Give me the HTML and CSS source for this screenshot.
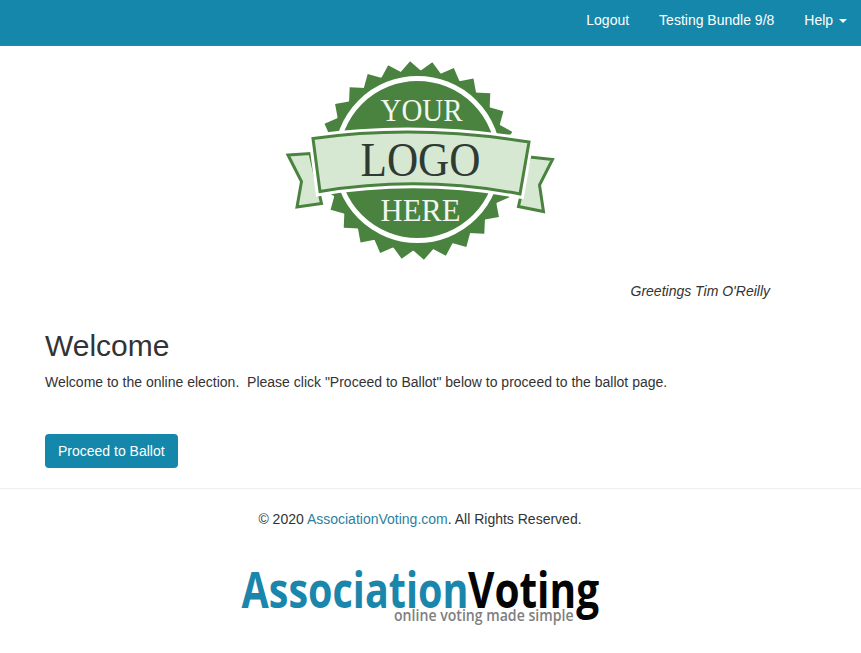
FILE: index.html
```html
<!DOCTYPE html>
<html>
<head>
<title>Welcome</title>
<link rel="stylesheet" href="styles.css">
</head>
<body>
<nav class="navbar">
    <a href="#">Logout</a>
    <a href="#">Testing Bundle 9/8</a>
    <a href="#">Help <span class="caret"></span></a>
</nav>

<div class="page">
    <div class="logo-row">
        <svg class="seal" width="270" height="204" viewBox="285 58 270 204">
            <defs>
                <polygon id="tooth" points="406,72 417,61 428,72"/>
            </defs>
            <path class="tail" d="M288 155 L310 153.5 L321.5 203.5 L297 207 L301.5 181.5 Z"/>
            <path class="tail" d="M529.5 157 L552.5 159.5 L539.5 185 L543.5 211.5 L518.5 206.5 Z"/>
            <g class="teeth">
                <circle cx="417" cy="160.5" r="90"/>
                <use href="#tooth" transform="rotate(-4 417 160.5)"/>
                <use href="#tooth" transform="rotate(8.86 417 160.5)"/>
                <use href="#tooth" transform="rotate(21.71 417 160.5)"/>
                <use href="#tooth" transform="rotate(34.57 417 160.5)"/>
                <use href="#tooth" transform="rotate(47.43 417 160.5)"/>
                <use href="#tooth" transform="rotate(60.29 417 160.5)"/>
                <use href="#tooth" transform="rotate(73.14 417 160.5)"/>
                <use href="#tooth" transform="rotate(86 417 160.5)"/>
                <use href="#tooth" transform="rotate(98.86 417 160.5)"/>
                <use href="#tooth" transform="rotate(111.71 417 160.5)"/>
                <use href="#tooth" transform="rotate(124.57 417 160.5)"/>
                <use href="#tooth" transform="rotate(137.43 417 160.5)"/>
                <use href="#tooth" transform="rotate(150.29 417 160.5)"/>
                <use href="#tooth" transform="rotate(163.14 417 160.5)"/>
                <use href="#tooth" transform="rotate(176 417 160.5)"/>
                <use href="#tooth" transform="rotate(188.86 417 160.5)"/>
                <use href="#tooth" transform="rotate(201.71 417 160.5)"/>
                <use href="#tooth" transform="rotate(214.57 417 160.5)"/>
                <use href="#tooth" transform="rotate(227.43 417 160.5)"/>
                <use href="#tooth" transform="rotate(240.29 417 160.5)"/>
                <use href="#tooth" transform="rotate(253.14 417 160.5)"/>
                <use href="#tooth" transform="rotate(266 417 160.5)"/>
                <use href="#tooth" transform="rotate(278.86 417 160.5)"/>
                <use href="#tooth" transform="rotate(291.71 417 160.5)"/>
                <use href="#tooth" transform="rotate(304.57 417 160.5)"/>
                <use href="#tooth" transform="rotate(317.43 417 160.5)"/>
                <use href="#tooth" transform="rotate(330.29 417 160.5)"/>
                <use href="#tooth" transform="rotate(343.14 417 160.5)"/>
            </g>
            <circle class="ring" cx="417.5" cy="159.5" r="81"/>
            <path class="banner-edge" d="M313 138.5 Q417 124 529 142 L520 194 Q420 175 320 191.5 Z"/>
            <path class="banner" d="M313 138.5 Q417 124 529 142 L520 194 Q420 175 320 191.5 Z"/>
            <text class="word word-light" x="380.5" y="120.5" font-size="32" textLength="82" lengthAdjust="spacingAndGlyphs">YOUR</text>
            <text class="word word-dark" x="360.5" y="176" font-size="48" textLength="120" lengthAdjust="spacingAndGlyphs">LOGO</text>
            <text class="word word-light" x="380.5" y="220.5" font-size="32" textLength="80" lengthAdjust="spacingAndGlyphs">HERE</text>
        </svg>
    </div>

    <div class="greeting">Greetings Tim O'Reilly</div>

    <div class="content">
        <h1>Welcome</h1>
        <p>Welcome to the online election.&nbsp; Please click "Proceed to Ballot" below to proceed to the ballot page.</p>
        <a href="#" class="btn">Proceed to Ballot</a>
    </div>
</div>

<hr class="divider">

<div class="page footer">
    <p>&copy; 2020 <a href="#">AssociationVoting.com</a>. All Rights Reserved.</p>
    <svg class="brand" width="360" height="72" viewBox="241 558 360 72">
        <text class="brand-name brand-blue" transform="translate(242.5 607.5) scale(.775 1)" font-size="51">Association</text>
        <text class="brand-name brand-black" transform="translate(469 607.5) scale(.796 1)" font-size="51">Voting</text>
        <text class="brand-tag" transform="translate(395 620.5) scale(.83 1)" font-size="17">online voting made simple</text>
    </svg>
</div>
</body>
</html>
```

FILE: styles.css
```css
body {
    margin: 0;
    font-family: "Liberation Sans", Arial, sans-serif;
    font-size: 14px;
    line-height: 20px;
    color: #333;
    background-color: #fff;
}

.navbar {
    display: flex;
    justify-content: flex-end;
    height: 45px;
    background-color: #1487ab;
    border-bottom: 1px solid #1a8fb5;
}

.navbar a {
    padding: 10px 15px 15px;
    color: #fff;
    text-decoration: none;
}

.navbar a:last-child {
    padding-right: 14px;
}

.caret {
    display: inline-block;
    margin-left: 2px;
    vertical-align: middle;
    border-top: 4px solid #fff;
    border-left: 4px solid transparent;
    border-right: 4px solid transparent;
}

.page {
    width: 840px;
}

.logo-row {
    display: flex;
    justify-content: center;
    padding-top: 12px;
}

.seal {
    display: block;
}

.tail {
    fill: #d6e8d2;
    stroke: #4a833f;
    stroke-width: 3;
}

.teeth {
    fill: #4a833f;
}

.ring {
    fill: #4a833f;
    stroke: #fff;
    stroke-width: 5;
}

.banner-edge {
    fill: none;
    stroke: #fff;
    stroke-width: 9;
}

.banner {
    fill: #d6e8d2;
    stroke: #4a833f;
    stroke-width: 3;
}

.word {
    font-family: "Liberation Serif", "Times New Roman", serif;
}

.word-light {
    fill: #f1f7ee;
}

.word-dark {
    fill: #2f3a33;
}

.greeting {
    margin-top: 19px;
    padding-right: 70px;
    text-align: right;
    font-style: italic;
}

.content {
    padding: 28px 45px 0;
}

h1 {
    margin: 0;
    font-size: 30px;
    font-weight: 500;
    line-height: 33px;
}

.content p {
    margin: 10px 0 42px;
}

.btn {
    display: inline-block;
    padding: 7px 13px;
    color: #fff;
    text-decoration: none;
    background-color: #1487ab;
    border-radius: 4px;
}

.divider {
    height: 1px;
    margin: 20px 0 0;
    border: 0;
    background-color: #eee;
}

.footer {
    text-align: center;
}

.footer p {
    margin: 20px 0 29px;
}

.footer a {
    color: #2c7fa0;
    text-decoration: none;
}

.brand {
    display: block;
    margin: 0 auto;
    overflow: visible;
}

.brand-name {
    font-family: "Open Sans", sans-serif;
    font-weight: 700;
}

.brand-blue {
    fill: #1a86ab;
}

.brand-black {
    fill: #050505;
}

.brand-tag {
    font-family: "Open Sans", sans-serif;
    font-weight: 600;
    fill: #808080;
}
```
